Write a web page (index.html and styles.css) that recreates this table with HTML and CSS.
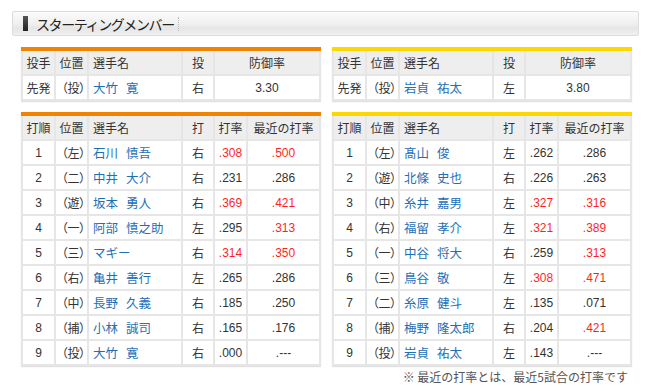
FILE: index.html
```html
<!DOCTYPE html>
<html lang="ja">
<head>
<meta charset="utf-8">
<link rel="stylesheet" href="styles.css">
</head>
<body>
<div class="page">
  <div class="title-bar">
    <span class="marker"></span>
    <span class="title">スターティングメンバー</span>
    <span class="sep"></span>
  </div>

  <div class="grid">
    <table class="tbl orange pitcher">
      <colgroup><col class="c1"><col class="c2"><col class="c3"><col class="c4"><col class="c5p"></colgroup>
      <tr><th>投手</th><th>位置</th><th class="l">選手名</th><th>投</th><th>防御率</th></tr>
      <tr><td>先発</td><td class="pos">（投）</td><td class="name"><span class="fn">大竹</span>寛</td><td>右</td><td>3.30</td></tr>
    </table>
    <table class="tbl yellow pitcher">
      <colgroup><col class="c1"><col class="c2"><col class="c3"><col class="c4"><col class="c5p"></colgroup>
      <tr><th>投手</th><th>位置</th><th class="l">選手名</th><th>投</th><th>防御率</th></tr>
      <tr><td>先発</td><td class="pos">（投）</td><td class="name"><span class="fn">岩貞</span>祐太</td><td>左</td><td>3.80</td></tr>
    </table>

    <table class="tbl orange batting">
      <colgroup><col class="c1"><col class="c2"><col class="c3"><col class="c4"><col class="c5"><col class="c6"></colgroup>
      <tr><th>打順</th><th>位置</th><th class="l">選手名</th><th>打</th><th>打率</th><th>最近の打率</th></tr>
      <tr><td>1</td><td class="pos">（左）</td><td class="name"><span class="fn">石川</span>慎吾</td><td>右</td><td class="red">.308</td><td class="red">.500</td></tr>
      <tr><td>2</td><td class="pos">（二）</td><td class="name"><span class="fn">中井</span>大介</td><td>右</td><td>.231</td><td>.286</td></tr>
      <tr><td>3</td><td class="pos">（遊）</td><td class="name"><span class="fn">坂本</span>勇人</td><td>右</td><td class="red">.369</td><td class="red">.421</td></tr>
      <tr><td>4</td><td class="pos">（一）</td><td class="name"><span class="fn">阿部</span>慎之助</td><td>左</td><td>.295</td><td class="red">.313</td></tr>
      <tr><td>5</td><td class="pos">（三）</td><td class="name">マギー</td><td>右</td><td class="red">.314</td><td class="red">.350</td></tr>
      <tr><td>6</td><td class="pos">（右）</td><td class="name"><span class="fn">亀井</span>善行</td><td>左</td><td>.265</td><td>.286</td></tr>
      <tr><td>7</td><td class="pos">（中）</td><td class="name"><span class="fn">長野</span>久義</td><td>右</td><td>.185</td><td>.250</td></tr>
      <tr><td>8</td><td class="pos">（捕）</td><td class="name"><span class="fn">小林</span>誠司</td><td>右</td><td>.165</td><td>.176</td></tr>
      <tr><td>9</td><td class="pos">（投）</td><td class="name"><span class="fn">大竹</span>寛</td><td>右</td><td>.000</td><td>.---</td></tr>
    </table>
    <table class="tbl yellow batting">
      <colgroup><col class="c1"><col class="c2"><col class="c3"><col class="c4"><col class="c5"><col class="c6"></colgroup>
      <tr><th>打順</th><th>位置</th><th class="l">選手名</th><th>打</th><th>打率</th><th>最近の打率</th></tr>
      <tr><td>1</td><td class="pos">（左）</td><td class="name"><span class="fn">髙山</span>俊</td><td>左</td><td>.262</td><td>.286</td></tr>
      <tr><td>2</td><td class="pos">（遊）</td><td class="name"><span class="fn">北條</span>史也</td><td>右</td><td>.226</td><td>.263</td></tr>
      <tr><td>3</td><td class="pos">（中）</td><td class="name"><span class="fn">糸井</span>嘉男</td><td>左</td><td class="red">.327</td><td class="red">.316</td></tr>
      <tr><td>4</td><td class="pos">（右）</td><td class="name"><span class="fn">福留</span>孝介</td><td>左</td><td class="red">.321</td><td class="red">.389</td></tr>
      <tr><td>5</td><td class="pos">（一）</td><td class="name"><span class="fn">中谷</span>将大</td><td>右</td><td>.259</td><td class="red">.313</td></tr>
      <tr><td>6</td><td class="pos">（三）</td><td class="name"><span class="fn">鳥谷</span>敬</td><td>左</td><td class="red">.308</td><td class="red">.471</td></tr>
      <tr><td>7</td><td class="pos">（二）</td><td class="name"><span class="fn">糸原</span>健斗</td><td>左</td><td>.135</td><td>.071</td></tr>
      <tr><td>8</td><td class="pos">（捕）</td><td class="name"><span class="fn">梅野</span>隆太郎</td><td>右</td><td>.204</td><td class="red">.421</td></tr>
      <tr><td>9</td><td class="pos">（投）</td><td class="name"><span class="fn">岩貞</span>祐太</td><td>左</td><td>.143</td><td>.---</td></tr>
    </table>
  </div>
  <p class="note">※ 最近の打率とは、最近5試合の打率です</p>
</div>
</body>
</html>
```

FILE: styles.css
```css
html, body {
  margin: 0;
  padding: 0;
  background: #fff;
}
body {
  font-family: "Liberation Sans", "Noto Sans CJK JP", sans-serif;
  color: #333;
}
.page {
  width: 650px;
  padding-top: 11px;
}
.title-bar {
  margin-left: 12px;
  width: 625px;
  height: 23px;
  border: 1px solid #dcdcdc;
  border-radius: 2px;
  background: linear-gradient(#fbfbfb, #f0f0f0 50%, #e6e6e6 70%, #f0f0f0);
  display: flex;
  align-items: center;
}
.marker {
  width: 5px;
  height: 15px;
  margin-left: 10px;
  background: linear-gradient(#555, #222);
}
.title {
  margin-left: 8px;
  font-size: 14px;
  font-family: "Noto Sans CJK JP", sans-serif;
  color: #222;
  letter-spacing: -1.4px;
  line-height: 1;
}
.sep {
  width: 0;
  height: 14px;
  margin-left: 4px;
  border-left: 1px dotted #bbb;
}
.grid {
  margin: 11px 0 0 21px;
  display: grid;
  grid-template-columns: 298px 298px;
  column-gap: 13px;
  row-gap: 11px;
  align-items: start;
}
.tbl {
  width: 298px;
  border-collapse: collapse;
  table-layout: fixed;
  box-shadow: 0 1px 1px rgba(0,0,0,0.12);
  font-size: 12px;
}
.tbl.orange { border-top: 4px solid #f08300; }
.tbl.yellow { border-top: 4px solid #fcd700; }
.c1 { width: 33px; }
.c2 { width: 33px; }
.c3 { width: 94px; }
.c4 { width: 32px; }
.c5 { width: 33px; }
.c5p { width: 106px; }
.c6 { width: 73px; }
.tbl th, .tbl td {
  border: 2px solid #e6e6e6;
  height: 23px;
  padding: 0;
  text-align: center;
  font-weight: normal;
  white-space: nowrap;
  color: #333;
}
.tbl th {
  background: #eeeeee;
  font-family: "Noto Sans CJK JP", sans-serif;
  font-size: 12px;
}
.tbl td {
  background: #fff;
}
.tbl td.pos {
  font-family: "Noto Sans CJK JP", sans-serif;
  letter-spacing: -0.5px;
}
.tbl tr:first-child th { border-top: 0; }
.tbl th.l { text-align: left; padding-left: 4px; }
.tbl td.name {
  text-align: left;
  padding-left: 4px;
  color: #1f6fb5;
  font-family: "Noto Sans CJK JP", sans-serif;
  font-size: 12.5px;
}
.fn { margin-right: 8px; }
.tbl td.red { color: #ff1f1f; }
.note {
  margin: 2px 22px 0 0;
  text-align: right;
  font-size: 12px;
  color: #555;
  font-family: "Noto Sans CJK JP", sans-serif;
}
```
